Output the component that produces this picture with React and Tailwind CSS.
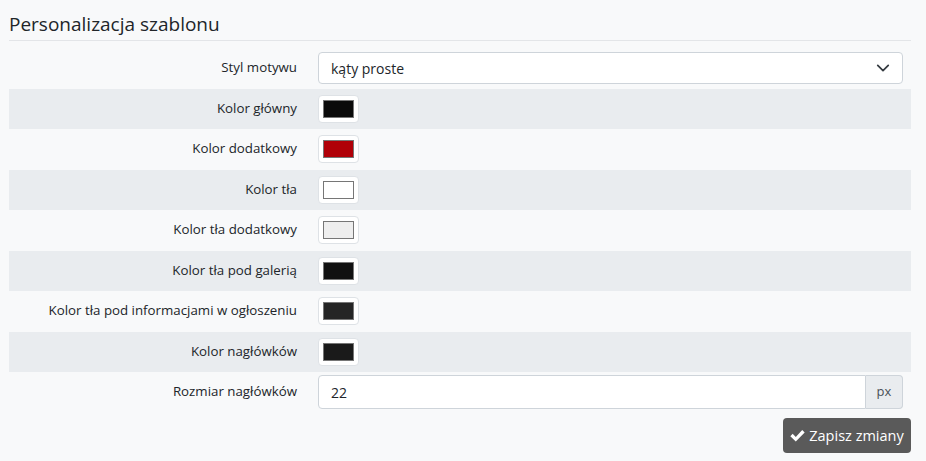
const rows = [
  { label: "Kolor główny", color: "#0a0a0a" },
  { label: "Kolor dodatkowy", color: "#b00008" },
  { label: "Kolor tła", color: "#ffffff" },
  { label: "Kolor tła dodatkowy", color: "#eeeeee" },
  { label: "Kolor tła pod galerią", color: "#111111" },
  { label: "Kolor tła pod informacjami w ogłoszeniu", color: "#252525" },
  { label: "Kolor nagłówków", color: "#1a1a1a" },
];

function Row({ label, gray, children }) {
  return (
    <div className={`flex items-center h-[40.5px] ${gray ? "bg-[#e9ecef]" : ""}`}>
      <div className="w-[288px] text-right text-[13.3px] text-[#212529] shrink-0">{label}</div>
      <div className="ml-[21px] mr-[8px] flex-1 flex items-center">{children}</div>
    </div>
  );
}

export default function App() {
  return (
    <div className="w-[926px] h-[461px] bg-[#f8f9fa] font-['Open_Sans',sans-serif] text-[#212529]">
      <div className="ml-[9px] w-[902px]">
        <h2 className="text-[19px] font-normal leading-none pt-[15px] pb-[6px] border-b border-[#e3e5e8]">
          Personalizacja szablonu
        </h2>
        <div className="mt-[7px]">
          <Row label="Styl motywu">
            <div className="w-full h-[32px] bg-white border border-[#ced4da] rounded-[4px] flex items-center justify-between pl-[12px] pr-[12px] text-[14px]">
              <span>kąty proste</span>
              <svg width="14" height="14" viewBox="0 0 16 16" fill="none" stroke="#343a40" strokeWidth="2" strokeLinecap="round" strokeLinejoin="round">
                <path d="M2 5l6 6 6-6" />
              </svg>
            </div>
          </Row>
          {rows.map((r, i) => (
            <Row key={r.label} label={r.label} gray={i % 2 === 0}>
              <div className="w-[41px] h-[28px] bg-white border border-[#dee2e6] rounded-[4px] p-[4px]">
                <div className="w-full h-full border border-[#767676]" style={{ background: r.color }} />
              </div>
            </Row>
          ))}
          <div className="flex items-center h-[40px]">
            <div className="w-[288px] text-right text-[13.3px] shrink-0">Rozmiar nagłówków</div>
            <div className="ml-[21px] mr-[8px] flex-1 flex h-[34px]">
              <div className="flex-1 bg-white border border-[#ced4da] rounded-l-[4px] flex items-center pl-[12px] text-[14px]">22</div>
              <div className="w-[37px] bg-[#e9ecef] border border-l-0 border-[#ced4da] rounded-r-[4px] flex items-center justify-center text-[13px] text-[#495057]">px</div>
            </div>
          </div>
        </div>
        <div className="flex justify-end mt-[6px]">
          <button className="h-[35px] w-[128px] bg-[#5a5a5a] rounded-[4px] text-white text-[14.5px] flex items-center justify-center gap-[4px]">
            <svg width="15" height="13" viewBox="0 0 14 12" fill="white">
              <path d="M0.3 6.6l2.2-2.2 2.9 2.9L11.4 0.8l2.3 2.3-8.3 8.6z" />
            </svg>
            Zapisz zmiany
          </button>
        </div>
      </div>
    </div>
  );
}
